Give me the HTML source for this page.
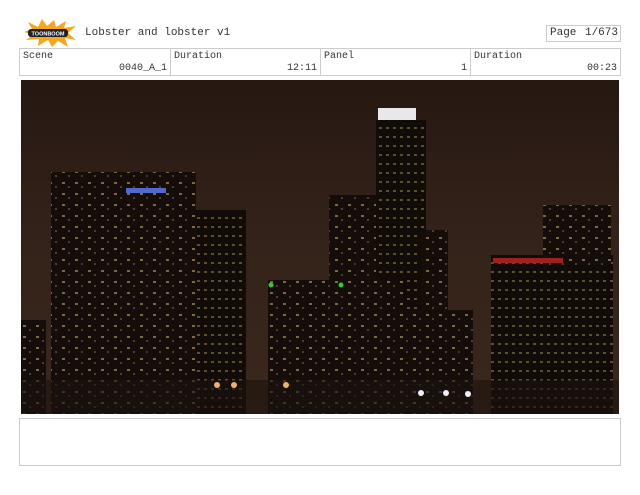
<!DOCTYPE html>
<html><head><meta charset="utf-8"><style>
body{margin:0;width:640px;height:495px;background:#fff;position:relative;overflow:hidden;font-family:"Liberation Mono",monospace;color:#333}
.a{position:absolute}
.cell{position:absolute;top:48px;height:28px;border:1px solid #ccc;box-sizing:border-box;font-size:10px}
.cell .l{position:absolute;left:3px;top:2px}
.cell .r{position:absolute;right:3px;top:14px}
</style></head><body>
<svg class="a" style="left:22px;top:18px" width="56" height="30" viewBox="0 0 56 30">
<polygon fill="#f5a623" points="2,14 10,11 6,4 16,9 20,1 25,8 32,2 34,9 44,3 42,10 54,8 46,15 54,22 43,20 46,29 36,23 30,29 26,22 16,28 17,21 4,22 11,17"/>
<rect x="6" y="11" width="40" height="8" rx="3" fill="#222"/>
<text x="26" y="17.5" font-size="5.5" fill="#fff" text-anchor="middle" font-family="Liberation Sans" font-weight="bold">TOONBOOM</text>
</svg>
<div class="a" style="left:85px;top:27px;font-size:11px">Lobster and lobster v1</div>
<div class="a" style="left:546px;top:25px;width:75px;height:17px;border:1px solid #ccc;box-sizing:border-box;font-size:11px"><span class="a" style="left:3px;top:1px">Page</span><span class="a" style="right:2px;top:1px">1/673</span></div>
<div class="cell" style="left:19px;width:152px"><span class="l">Scene</span><span class="r">0040_A_1</span></div>
<div class="cell" style="left:170px;width:151px"><span class="l">Duration</span><span class="r">12:11</span></div>
<div class="cell" style="left:320px;width:151px"><span class="l">Panel</span><span class="r">1</span></div>
<div class="cell" style="left:470px;width:151px"><span class="l">Duration</span><span class="r">00:23</span></div>
<svg class="a" style="left:21px;top:80px" width="598" height="334" viewBox="0 0 598 334">
<defs>
<linearGradient id="sky" x1="0" y1="0" x2="0" y2="1"><stop offset="0" stop-color="#261812"/><stop offset="0.5" stop-color="#34231a"/><stop offset="1" stop-color="#3a281d"/></linearGradient>
<pattern id="w" width="7" height="9" patternUnits="userSpaceOnUse"><rect width="7" height="9" fill="#120c09"/><rect x="1" y="2" width="3" height="2" fill="#a88d5a" opacity=".5"/></pattern>
<pattern id="w2" width="13" height="11" patternUnits="userSpaceOnUse"><rect width="13" height="11" fill="#140d0a"/><rect x="2" y="3" width="3" height="2" fill="#c2a66c" opacity=".6"/><rect x="8" y="7" width="2" height="2" fill="#8a7048" opacity=".5"/></pattern>
</defs>
<rect width="598" height="334" fill="url(#sky)"/>
<rect x="30" y="92" width="145" height="242" fill="url(#w2)"/>
<rect x="105" y="108" width="40" height="5" fill="#5068d0"/>
<rect x="175" y="130" width="50" height="204" fill="url(#w)"/>
<rect x="308" y="115" width="48" height="219" fill="url(#w2)"/>
<rect x="355" y="40" width="50" height="294" fill="url(#w)"/>
<rect x="357" y="28" width="38" height="12" fill="#e8e8ea"/>
<rect x="400" y="150" width="27" height="184" fill="url(#w2)"/>
<rect x="247" y="200" width="135" height="134" fill="url(#w2)"/>
<rect x="382" y="230" width="70" height="104" fill="url(#w2)"/>
<rect x="470" y="175" width="122" height="159" fill="url(#w)"/>
<rect x="522" y="125" width="68" height="60" fill="url(#w2)"/>
<rect x="472" y="178" width="70" height="5" fill="#a02020"/>
<rect x="0" y="240" width="25" height="94" fill="url(#w2)"/>
<rect x="0" y="300" width="598" height="34" fill="#1a120e" opacity=".6"/>
<circle cx="196" cy="305" r="3" fill="#f0b070"/><circle cx="213" cy="305" r="3" fill="#f0b070"/><circle cx="265" cy="305" r="3" fill="#f0b070"/><circle cx="400" cy="313" r="3" fill="#eef"/><circle cx="425" cy="313" r="3" fill="#eef"/><circle cx="447" cy="314" r="3" fill="#eef"/>
<circle cx="250" cy="205" r="2.5" fill="#3c3"/><circle cx="320" cy="205" r="2.5" fill="#3c3"/>
</svg>
<div class="a" style="left:19px;top:418px;width:602px;height:48px;border:1px solid #ccc;box-sizing:border-box"></div>
</body></html>
